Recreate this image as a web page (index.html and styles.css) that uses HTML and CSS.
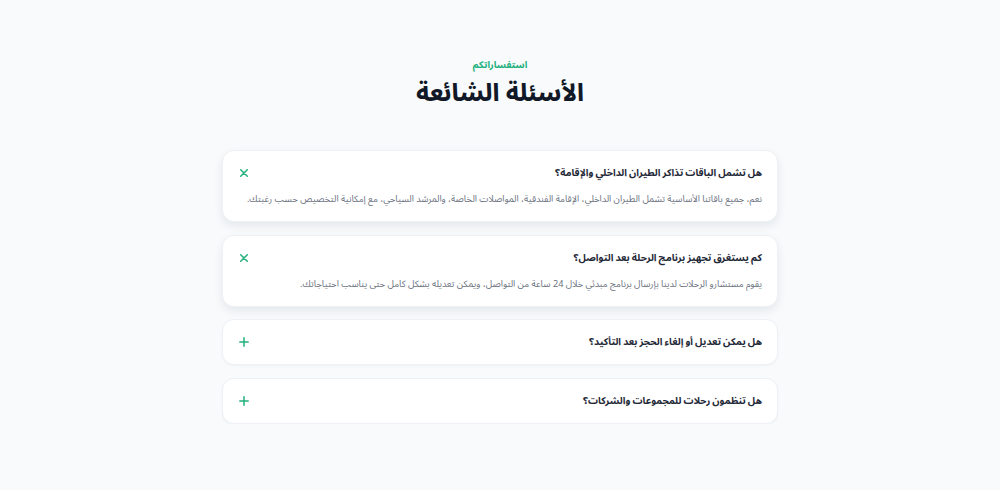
FILE: index.html
```html
<!DOCTYPE html>
<html lang="ar" dir="rtl">
<head>
<meta charset="utf-8">
<title>الأسئلة الشائعة</title>
<link rel="stylesheet" href="styles.css">
</head>
<body>
<section class="faq">
  <header class="faq-head">
    <p class="eyebrow">استفساراتكم</p>
    <h1 class="title">الأسئلة الشائعة</h1>
  </header>
  <div class="list">
    <div class="item open">
      <div class="q-row">
        <h3 class="q">هل تشمل الباقات تذاكر الطيران الداخلي والإقامة؟</h3>
        <svg class="icon" viewBox="0 0 10 10" width="10" height="10"><path d="M1.7 1.7L8.3 8.3M8.3 1.7L1.7 8.3" stroke="#22b07d" stroke-width="1.5" stroke-linecap="round"/></svg>
      </div>
      <p class="a">نعم، جميع باقاتنا الأساسية تشمل الطيران الداخلي، الإقامة الفندقية، المواصلات الخاصة، والمرشد السياحي، مع إمكانية التخصيص حسب رغبتك.</p>
    </div>
    <div class="item open">
      <div class="q-row">
        <h3 class="q">كم يستغرق تجهيز برنامج الرحلة بعد التواصل؟</h3>
        <svg class="icon" viewBox="0 0 10 10" width="10" height="10"><path d="M1.7 1.7L8.3 8.3M8.3 1.7L1.7 8.3" stroke="#22b07d" stroke-width="1.5" stroke-linecap="round"/></svg>
      </div>
      <p class="a">يقوم مستشارو الرحلات لدينا بإرسال برنامج مبدئي خلال 24 ساعة من التواصل، ويمكن تعديله بشكل كامل حتى يناسب احتياجاتك.</p>
    </div>
    <div class="item">
      <div class="q-row">
        <h3 class="q">هل يمكن تعديل أو إلغاء الحجز بعد التأكيد؟</h3>
        <svg class="icon" viewBox="0 0 10 10" width="10" height="10"><path d="M5 0.8V9.2M0.8 5H9.2" stroke="#22b07d" stroke-width="1.5" stroke-linecap="round"/></svg>
      </div>
    </div>
    <div class="item">
      <div class="q-row">
        <h3 class="q">هل تنظمون رحلات للمجموعات والشركات؟</h3>
        <svg class="icon" viewBox="0 0 10 10" width="10" height="10"><path d="M5 0.8V9.2M0.8 5H9.2" stroke="#22b07d" stroke-width="1.5" stroke-linecap="round"/></svg>
      </div>
    </div>
  </div>
</section>
</body>
</html>
```
FILE: styles.css
```css
* { box-sizing: border-box; }
html, body { margin: 0; padding: 0; }
body {
  background: #f8fafc;
  font-family: "Noto Sans Arabic", "Noto Sans", "DejaVu Sans", sans-serif;
  color: #0f172a;
}
.faq {
  width: 556px;
  margin: 0 auto;
  padding-top: 56px;
}
.faq-head {
  text-align: center;
  margin-bottom: 41px;
}
.eyebrow {
  margin: 0;
  font-size: 9.6px;
  font-weight: 700;
  color: #22b07d;
  line-height: 18px;
}
.title {
  margin: 5px 0 0;
  font-size: 24px;
  font-weight: 800;
  line-height: 30px;
  color: #111827;
}
.list {
  display: flex;
  flex-direction: column;
  gap: 12.5px;
}
.item {
  background: #fff;
  border: 1px solid #eef1f5;
  border-radius: 12px;
  padding: 13px 15px 13px 16px;
  box-shadow: 0 1px 3px rgba(15, 23, 42, 0.04);
}
.item.open {
  box-shadow: 0 4px 10px rgba(15, 23, 42, 0.08);
}
.q-row {
  display: flex;
  align-items: center;
  justify-content: space-between;
  height: 18px;
}
.q {
  margin: 0;
  font-size: 9.9px;
  font-weight: 700;
  word-spacing: -0.5px;
  color: #1f2937;
  line-height: 18px;
}
.icon { flex: none; }
.a {
  margin: 8px 0 0;
  font-size: 9.2px;
  line-height: 18px;
  color: #6b7280;
  white-space: nowrap;
}
```
